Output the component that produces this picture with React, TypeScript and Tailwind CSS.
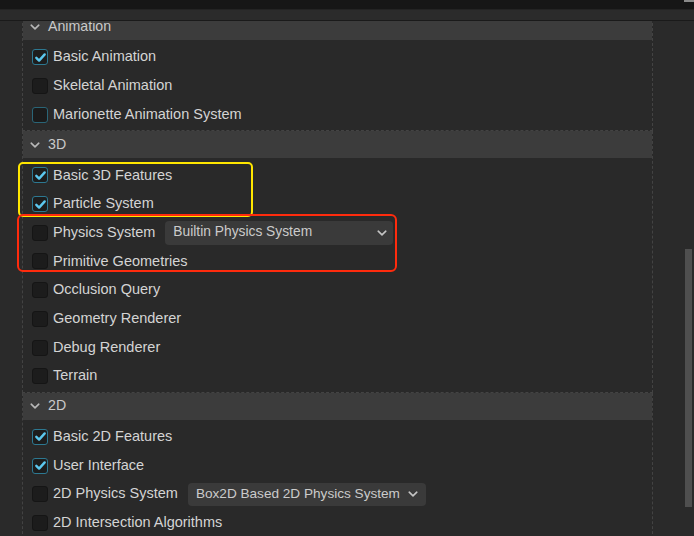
import React from "react";

type Row = {
  label: string;
  checked?: boolean;
  focus?: boolean;
  select?: { text: string; wide?: boolean };
};

type Section = { title: string; rows: Row[] };

const sections: Section[] = [
  {
    title: "Animation",
    rows: [
      { label: "Basic Animation", checked: true },
      { label: "Skeletal Animation" },
      { label: "Marionette Animation System", focus: true },
    ],
  },
  {
    title: "3D",
    rows: [
      { label: "Basic 3D Features", checked: true },
      { label: "Particle System", checked: true },
      { label: "Physics System", select: { text: "Builtin Physics System", wide: true } },
      { label: "Primitive Geometries" },
      { label: "Occlusion Query" },
      { label: "Geometry Renderer" },
      { label: "Debug Renderer" },
      { label: "Terrain" },
    ],
  },
  {
    title: "2D",
    rows: [
      { label: "Basic 2D Features", checked: true },
      { label: "User Interface", checked: true },
      { label: "2D Physics System", select: { text: "Box2D Based 2D Physics System" } },
      { label: "2D Intersection Algorithms" },
    ],
  },
];

function Chevron({ className }: { className?: string }) {
  return (
    <svg width="10" height="6" viewBox="0 0 10 6" className={className} fill="none">
      <path d="M1.2 1.2 L5 4.8 L8.8 1.2" stroke="currentColor" strokeWidth="1.6" strokeLinecap="round" strokeLinejoin="round" />
    </svg>
  );
}

function Checkbox({ checked, focus }: { checked?: boolean; focus?: boolean }) {
  if (checked) {
    return (
      <div className="w-[16px] h-[16px] shrink-0 rounded-[3px] border-[1.5px] border-[#2d7891] bg-[#1d1d1d] flex items-center justify-center">
        <svg width="13" height="13" viewBox="0 0 13 13" fill="none">
          <path d="M2.3 6.8 L5.1 9.6 L10.7 3.4" stroke="#5cc8ee" strokeWidth="2.4" strokeLinecap="round" strokeLinejoin="round" />
        </svg>
      </div>
    );
  }
  return (
    <div
      className={
        focus
          ? "w-[16px] h-[16px] shrink-0 rounded-[3px] border-[1.5px] border-[#2a6577] bg-[#1b1b1b]"
          : "w-[16px] h-[16px] shrink-0 rounded-[3px] border border-[#151515] bg-[#1c1c1c]"
      }
    />
  );
}

export default function App() {
  return (
    <div className="relative w-[694px] h-[536px] overflow-hidden bg-[#2a2a2a] flex flex-col font-['Liberation_Sans','Helvetica',sans-serif]">
      <div className="h-[9px] shrink-0 bg-[#161616]" />
      <div className="h-[12px] shrink-0 bg-[#2b2b2b] border-t border-[#232323] border-b border-b-[#1a1a1a]" />
      <div className="flex-1 flex overflow-hidden">
        <div className="w-[22px] shrink-0 bg-[#2a2a2a]" />
        <div className="w-[631px] shrink-0 overflow-hidden">
          <div className="-mt-[8px]">
            {sections.map((s) => (
              <div key={s.title} className="border-x border-b border-dashed border-[#434343] bg-[#292929]">
                <div className="h-[27px] bg-[#3c3c3c] flex items-center pl-[7px] text-[#c9c9c9] text-[14.2px]">
                  <Chevron className="text-[#b8b8b8]" />
                  <span className="ml-[8px]">{s.title}</span>
                </div>
                <div className="pt-[3px] pb-[1px]">
                  {s.rows.map((r) => (
                    <div key={r.label} className="h-[28.7px] flex items-center pl-[9px]">
                      <Checkbox checked={r.checked} focus={r.focus} />
                      <span className="ml-[5px] text-[14.5px] text-[#d4d4d4] whitespace-nowrap">{r.label}</span>
                      {r.select &&
                        (r.select.wide ? (
                          <div className="ml-[10px] w-[228px] h-[24px] rounded-[4px] bg-[#3a3a3a] flex items-center justify-between pl-[8px] pr-[6px] text-[13.8px] text-[#cbcbcb] whitespace-nowrap">
                            <span>{r.select.text}</span>
                            <Chevron className="text-[#c4c4c4]" />
                          </div>
                        ) : (
                          <div className="ml-[10px] h-[23px] rounded-[4px] bg-[#3a3a3a] flex items-center pl-[8px] pr-[8px] gap-[8px] text-[13.6px] text-[#cbcbcb] whitespace-nowrap">
                            <span>{r.select.text}</span>
                            <Chevron className="text-[#c4c4c4]" />
                          </div>
                        ))}
                    </div>
                  ))}
                </div>
              </div>
            ))}
          </div>
        </div>
        <div className="flex-1 relative bg-[#2a2a2a]">
          <div className="absolute left-[32px] top-[228px] w-[7px] h-[258px] bg-[#4f4f4f]" />
        </div>
      </div>

      {/* top-right sliver */}
      <div className="absolute right-0 top-0 w-[10px] h-[2px] bg-[#8a8a8a]" />

      {/* annotation boxes */}
      <div className="absolute left-[18px] top-[162px] w-[235px] h-[55px] rounded-[5px] border-[2.5px] border-[#ffe600]" />
      <div className="absolute left-[17px] top-[214px] w-[380px] h-[58px] rounded-[6px] border-[2.5px] border-[#ff2b0d]" />
    </div>
  );
}
